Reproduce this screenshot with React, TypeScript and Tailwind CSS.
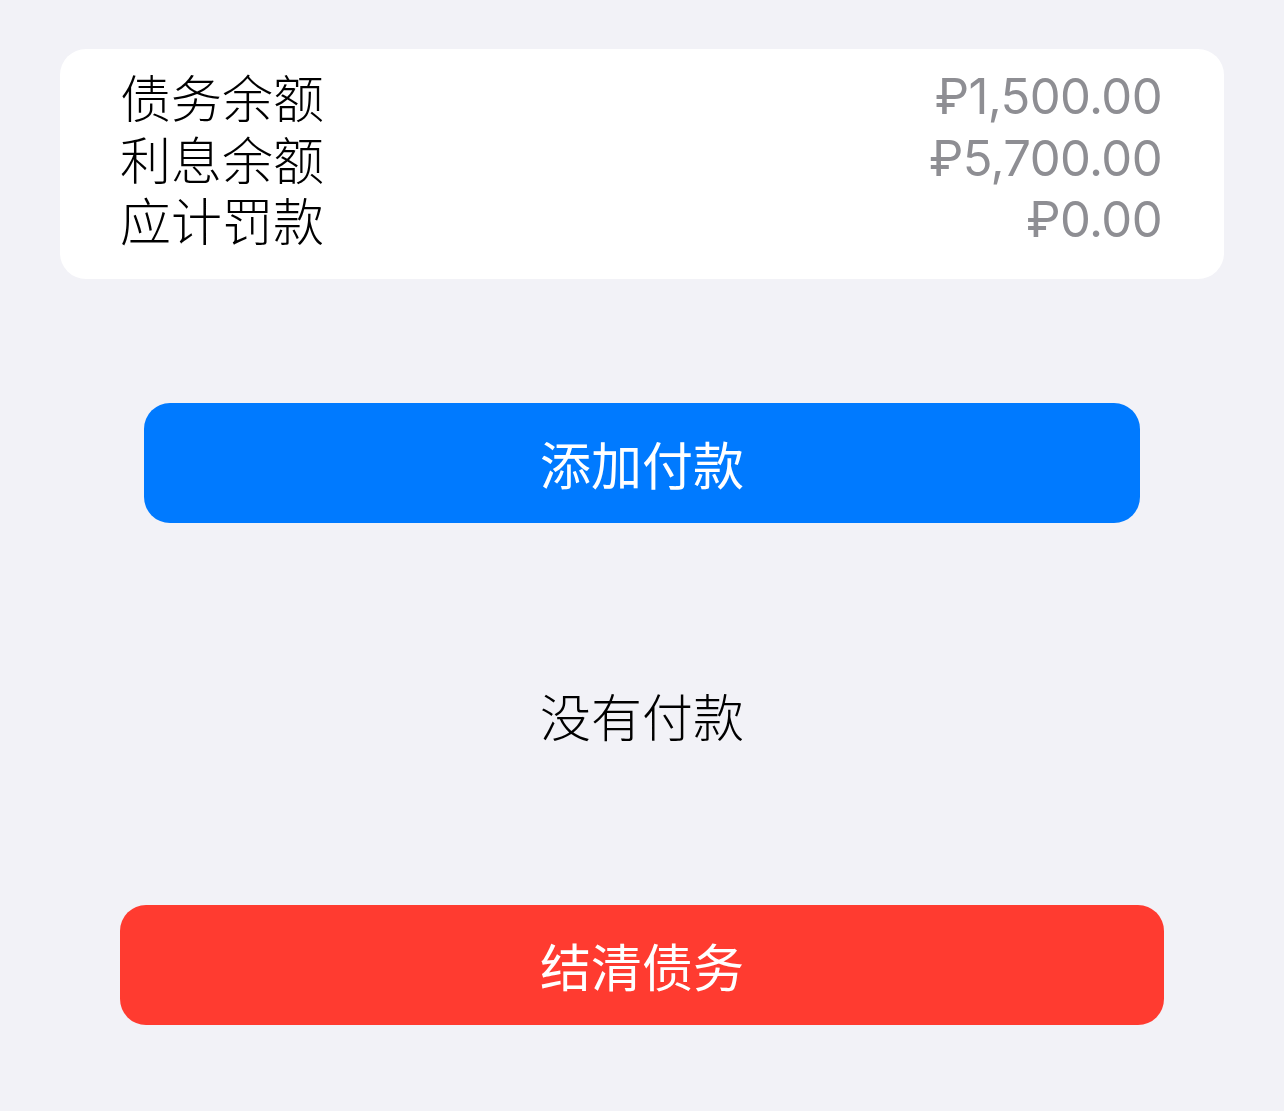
export default function App() {
  const rows = [
    { label: '债务余额', value: '₽1,500.00' },
    { label: '利息余额', value: '₽5,700.00' },
    { label: '应计罚款', value: '₽0.00' },
  ];

  return (
    <div className="w-[1284px] h-[1111px] bg-[#f2f2f7] overflow-hidden font-['Inter','Noto_Sans_CJK_SC',sans-serif]">
      <div className="mx-[60px] mt-[49px] h-[230px] rounded-[26px] bg-white pl-[60px] pr-[62px] pt-[17px]">
        {rows.map((row) => (
          <div key={row.label} className="flex h-[61.5px] items-center justify-between">
            <span className="text-[51px] font-light text-black leading-[61px] font-['Noto_Sans_CJK_SC',sans-serif]">
              {row.label}
            </span>
            <span className="text-[49px] font-normal tracking-[-0.6px] text-[#8e8e93] leading-[61px]">{row.value}</span>
          </div>
        ))}
      </div>

      <button className="mx-[144px] mt-[124px] flex h-[120px] w-[996px] items-center justify-center rounded-[26px] bg-[#007aff] text-[51px] text-white leading-none font-['Noto_Sans_CJK_SC',sans-serif]">
        添加付款
      </button>

      <div className="mt-[162px] flex h-[60px] items-center justify-center text-[51px] font-light text-black leading-none font-['Noto_Sans_CJK_SC',sans-serif]">
        没有付款
      </div>

      <button className="mx-[120px] mt-[160px] flex h-[120px] w-[1044px] items-center justify-center rounded-[26px] bg-[#ff3b30] text-[51px] text-white leading-none font-['Noto_Sans_CJK_SC',sans-serif]">
        结清债务
      </button>
    </div>
  );
}
